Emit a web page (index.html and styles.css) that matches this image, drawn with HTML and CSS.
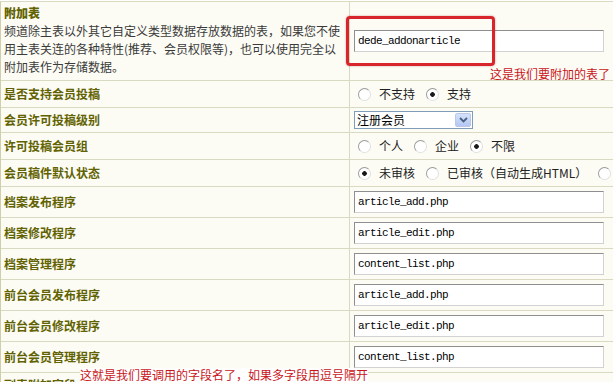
FILE: index.html
```html
<!DOCTYPE html>
<html lang="zh-CN">
<head>
  <meta charset="UTF-8">
  <title>附加表设置</title>
  <link rel="stylesheet" href="styles.css">
</head>
<body>

<div class="page">
  <form class="form">

    <div class="row r79">
      <div class="lbl desc">
        <strong>附加表</strong>
        <p>频道除主表以外其它自定义类型数据存放数据的表，如果您不使<br>用主表关连的各种特性(推荐、会员权限等)，也可以使用完全以<br>附加表作为存储数据。</p>
      </div>
      <div class="val"><input class="txt" type="text" name="addtable" value="dede_addonarticle"></div>
    </div>

    <div class="row r27">
      <div class="lbl">是否支持会员投稿</div>
      <div class="val">
        <label class="opt"><input type="radio" name="issend" value="0"> 不支持</label>
        <label class="opt"><input type="radio" name="issend" value="1" checked> 支持</label>
      </div>
    </div>

    <div class="row r25">
      <div class="lbl">会员许可投稿级别</div>
      <div class="val">
        <div class="sel">
          <span class="sel-text">注册会员</span>
          <span class="sel-btn">
            <svg width="9" height="6" viewBox="0 0 9 6"><path d="M1 1 L4.5 4.5 L8 1" fill="none" stroke="#4a5f86" stroke-width="1.8"/></svg>
          </span>
        </div>
      </div>
    </div>

    <div class="row r27">
      <div class="lbl">许可投稿会员组</div>
      <div class="val">
        <label class="opt"><input type="radio" name="usertype" value="个人"> 个人</label>
        <label class="opt"><input type="radio" name="usertype" value="企业"> 企业</label>
        <label class="opt"><input type="radio" name="usertype" value="" checked> 不限</label>
      </div>
    </div>

    <div class="row r27">
      <div class="lbl">会员稿件默认状态</div>
      <div class="val">
        <label class="opt"><input type="radio" name="arcsta" value="-1" checked> 未审核</label>
        <label class="opt"><input type="radio" name="arcsta" value="0"> 已审核（自动生成HTML）</label>
        <label class="opt"><input type="radio" name="arcsta" value="1"></label>
      </div>
    </div>

    <div class="row">
      <div class="lbl">档案发布程序</div>
      <div class="val"><input class="txt" type="text" name="addcon" value="article_add.php"></div>
    </div>

    <div class="row">
      <div class="lbl">档案修改程序</div>
      <div class="val"><input class="txt" type="text" name="editcon" value="article_edit.php"></div>
    </div>

    <div class="row">
      <div class="lbl">档案管理程序</div>
      <div class="val"><input class="txt" type="text" name="manacon" value="content_list.php"></div>
    </div>

    <div class="row">
      <div class="lbl">前台会员发布程序</div>
      <div class="val"><input class="txt" type="text" name="useraddcon" value="article_add.php"></div>
    </div>

    <div class="row">
      <div class="lbl">前台会员修改程序</div>
      <div class="val"><input class="txt" type="text" name="usereditcon" value="article_edit.php"></div>
    </div>

    <div class="row">
      <div class="lbl">前台会员管理程序</div>
      <div class="val"><input class="txt" type="text" name="usermanacon" value="content_list.php"></div>
    </div>

    <div class="row r25">
      <div class="lbl">副表附加字段</div>
      <div class="val"></div>
    </div>

  </form>

  <!-- 截图上的标注 -->
  <div class="mark-box"></div>
  <div class="note note-table">这是我们要附加的表了</div>
  <div class="note note-field">这就是我们要调用的字段名了，如果多字段用逗号隔开</div>
</div>

</body>
</html>
```

FILE: styles.css
```css
* { box-sizing: border-box; }
body { margin: 0; background: #fff; font-family: "Noto Sans CJK SC", sans-serif; font-size: 12px; line-height: 14px; color: #333; overflow: hidden; }

.page { position: relative; width: 613px; height: 382px; padding-top: 1px; overflow: hidden; }
.form { margin: 0; border-top: 1px solid #dadac2; border-left: 1px solid #cfcfae; background: #fcfcf5; }

.row { display: flex; height: 31px; border-bottom: 1px solid #dadac2; }
.row.r79 { height: 79px; }
.row.r27 { height: 27px; }
.row.r25 { height: 25px; }

.lbl { width: 349px; flex: none; padding-left: 3px; border-right: 1px solid #dadac2; display: flex; align-items: center; font-weight: bold; color: #626200; }
.lbl.desc { display: block; padding-top: 3px; }
.desc strong { display: block; line-height: 16px; }
.desc p { margin: 1px 0 0; font-weight: normal; color: #3a3a3a; line-height: 18px; white-space: nowrap; }

.val { flex: 1; min-width: 0; padding-left: 4px; display: flex; align-items: center; white-space: nowrap; color: #222; }

.txt { width: 250px; height: 22px; margin: 0; padding: 0 3px; border: 1px solid; border-color: #8f8f8f #d2d2d2 #d2d2d2 #8f8f8f; background: #fff; color: #000; font-family: "Liberation Mono", monospace; font-size: 11px; letter-spacing: -0.6px; }

.opt { display: inline-flex; align-items: center; margin-right: 7px; }
.opt input { -webkit-appearance: none; appearance: none; width: 13px; height: 13px; margin: 0 8px 0 4px; border-radius: 50%; border: 1px solid; border-color: #9a9a9a #e0e0e0 #e0e0e0 #9a9a9a; background: #fff; }
.opt input:checked { background: radial-gradient(circle, #1a1a1a 0 2px, #fff 2.6px); }

.sel { width: 119px; height: 18px; display: flex; align-items: center; border: 1px solid #7f9db9; background: #fff; color: #000; }
.sel-text { flex: 1; padding-left: 2px; }
.sel-btn { width: 16px; height: 14px; margin-right: 1px; display: flex; align-items: center; justify-content: center; border: 1px solid #b8c8ee; border-radius: 2px; background: linear-gradient(#d6e2fc, #b4c7f2); }

.mark-box { position: absolute; left: 346px; top: 16px; width: 149px; height: 50px; border: 3px solid #d7252b; border-radius: 4px; box-shadow: 0 0 2px rgba(150, 0, 0, .45); }
.note { position: absolute; color: #c8151b; line-height: 14px; }
.note-table { left: 490px; top: 67px; }
.note-field { left: 80px; top: 368px; background: #fff; }
```
